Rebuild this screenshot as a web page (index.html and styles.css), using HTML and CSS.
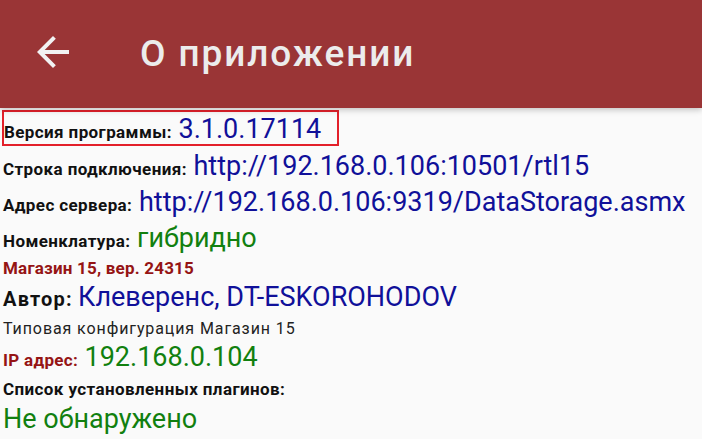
FILE: index.html
```html
<!DOCTYPE html>
<html lang="ru">
<head>
<meta charset="utf-8">
<title>О приложении</title>
<link rel="stylesheet" href="styles.css">
</head>
<body>
<header class="appbar">
  <svg class="back" viewBox="0 0 24 24" width="48" height="48" aria-hidden="true">
    <path d="M20 11H7.83l5.59-5.59L12 4l-8 8 8 8 1.41-1.41L7.83 13H20v-2z" fill="#f2f2f2"/>
  </svg>
  <h1 class="title">О приложении</h1>
</header>
<main class="content">
  <div class="row r1 boxed"><span class="label">Версия программы: </span><span class="val blue">3.1.0.17114</span></div>
  <div class="row r2"><span class="label">Строка подключения: </span><span class="val blue">http://192.168.0.106:10501/rtl15</span></div>
  <div class="row r3"><span class="label">Адрес сервера: </span><span class="val blue">http://192.168.0.106:9319/DataStorage.asmx</span></div>
  <div class="row r4"><span class="label">Номенклатура: </span><span class="val green">гибридно</span></div>
  <div class="row r5"><span class="label red shop">Магазин 15, вер. 24315</span></div>
  <div class="row r6"><span class="label big">Автор: </span><span class="val blue">Клеверенс, DT-ESKOROHODOV</span></div>
  <div class="row r7"><span class="plain">Типовая конфигурация Магазин 15</span></div>
  <div class="row r8"><span class="label red ip">IP адрес: </span><span class="val green">192.168.0.104</span></div>
  <div class="row r9"><span class="label">Список установленных плагинов:</span></div>
  <div class="row r10"><span class="val green">Не обнаружено</span></div>
</main>
</body>
</html>
```
FILE: styles.css
```css
html, body {
  margin: 0;
  padding: 0;
}
body {
  width: 702px;
  height: 439px;
  overflow: hidden;
  background: #fafafa;
  font-family: Roboto, "Liberation Sans", sans-serif;
  font-size: 16px;
}
.appbar {
  height: 108px;
  background: #9a3536;
  display: flex;
  align-items: center;
  padding-left: 29px;
  box-shadow: 0 2px 6px rgba(0,0,0,0.22);
  position: relative;
  z-index: 1;
}
.back {
  display: block;
  margin-top: -4px;
}
.title {
  margin: -2px 0 0 63px;
  font-size: 37px;
  font-weight: 500;
  letter-spacing: 1.9px;
  color: #ececec;
}
.content {
  padding-top: 2px;
}
.row {
  padding-left: 3px;
  white-space: nowrap;
}
.boxed {
  display: inline-block;
  vertical-align: top;
  margin-left: 2px;
  padding-left: 0;
  padding-right: 16px;
  padding-top: 3px;
  border: 2px solid #e3202a;
}
.label {
  font-size: 17px;
  font-weight: 700;
  letter-spacing: 0.4px;
  color: #111;
}
.label.big {
  font-size: 20px;
  letter-spacing: 1.2px;
}
.label.red {
  color: #951414;
}
.label.shop {
  letter-spacing: 0.2px;
}
.label.ip {
  letter-spacing: 0.3px;
}
.plain {
  font-size: 16px;
  letter-spacing: 0.9px;
  color: #222;
}
.val {
  font-size: 27px;
  margin-left: 2px;
}
.r6 .val { margin-left: -1px; }
.r10 .val { margin-left: 0; }
.blue { color: #101099; }
.green { color: #11800f; }
.r1 { height: 29px; line-height: 29px; }
.r2 { height: 40px; line-height: 40px; }
.r3 { height: 32px; line-height: 32px; }
.r4 { height: 40px; line-height: 40px; }
.r5 { height: 20px; line-height: 20px; }
.r6 { height: 38px; line-height: 38px; }
.r7 { height: 25px; line-height: 25px; }
.r8 { height: 32px; line-height: 32px; }
.r9 { height: 32px; line-height: 32px; }
.r10 { height: 28px; line-height: 28px; }
```
